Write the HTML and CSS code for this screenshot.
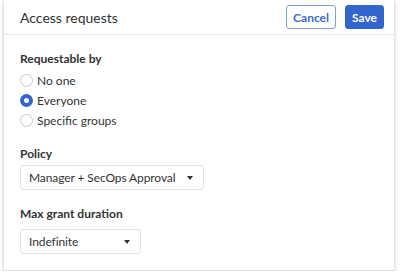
FILE: index.html
```html
<!DOCTYPE html>
<html lang="en">
<head>
    <meta charset="UTF-8">
    <title>Access requests</title>
    <link rel="stylesheet" href="styles.css">
</head>
<body>
    <div class="panel">
        <div class="panel-header">
            <h2 class="panel-title">Access requests</h2>
            <div class="actions">
                <button class="btn btn-outline">Cancel</button>
                <button class="btn btn-primary">Save</button>
            </div>
        </div>

        <div class="panel-body">
            <div class="field">
                <div class="field-label">Requestable by</div>
                <label class="radio"><span class="radio-dot"></span>No one</label>
                <label class="radio"><span class="radio-dot checked"></span>Everyone</label>
                <label class="radio"><span class="radio-dot"></span>Specific groups</label>
            </div>

            <div class="field">
                <div class="field-label">Policy</div>
                <div class="select select-wide">
                    <span>Manager + SecOps Approval</span>
                    <span class="caret"></span>
                </div>
            </div>

            <div class="field field-last">
                <div class="field-label">Max grant duration</div>
                <div class="select select-narrow">
                    <span>Indefinite</span>
                    <span class="caret"></span>
                </div>
            </div>
        </div>
    </div>
</body>
</html>
```

FILE: styles.css
```css
* {
    margin: 0;
    padding: 0;
    box-sizing: border-box;
    font-family: Lato, 'Noto Sans', sans-serif;
}

body {
    background: #fff;
    color: #333;
}

.panel {
    margin: 0 5px 0 3px;
    height: 271px;
    background: #fff;
    border: 1px solid #e4e4e4;
    border-top: none;
    box-shadow: 0 2px 3px rgba(0,0,0,0.18);
}

.panel-header {
    height: 35px;
    padding: 0 10px 0 16px;
    display: flex;
    justify-content: space-between;
    align-items: center;
    border-bottom: 1px solid #e6e6e6;
}

.panel-title {
    font-size: 14px;
    font-weight: 400;
    color: #333;
}

.actions {
    display: flex;
    gap: 9px;
}

.btn {
    height: 24px;
    padding: 0 6px;
    border-radius: 3px;
    font-size: 12px;
    font-weight: 700;
    cursor: pointer;
}

.btn-outline {
    background: #fff;
    color: #3a6bd0;
    border: 1px solid #7fa0e0;
}

.btn-primary {
    background: #3366cc;
    color: #fff;
    border: 1px solid #3366cc;
}

.panel-body {
    padding: 16px 16px;
}

.field {
    margin-bottom: 16px;
}

.field-label {
    font-size: 12px;
    font-weight: 700;
    color: #333;
    margin-bottom: 4px;
}

.field-last .field-label {
    margin-bottom: 8px;
}

.radio {
    display: flex;
    align-items: center;
    gap: 4px;
    height: 20px;
    font-size: 12px;
    color: #333;
}

.radio-dot {
    width: 13px;
    height: 13px;
    border-radius: 50%;
    border: 1px solid #c8c8c8;
    background: #fff;
}

.radio-dot.checked {
    border: 4px solid #3366cc;
}

.select {
    height: 25px;
    padding: 0 10px 0 8px;
    display: flex;
    justify-content: space-between;
    align-items: center;
    border: 1px solid #e2e2e2;
    border-radius: 3px;
    font-size: 12px;
    letter-spacing: -0.1px;
    color: #333;
    white-space: nowrap;
}

.select-wide {
    width: 184px;
}

.select-narrow {
    width: 121px;
}

.caret {
    width: 0;
    height: 0;
    border-left: 3.5px solid transparent;
    border-right: 3.5px solid transparent;
    border-top: 4px solid #333;
}
```
